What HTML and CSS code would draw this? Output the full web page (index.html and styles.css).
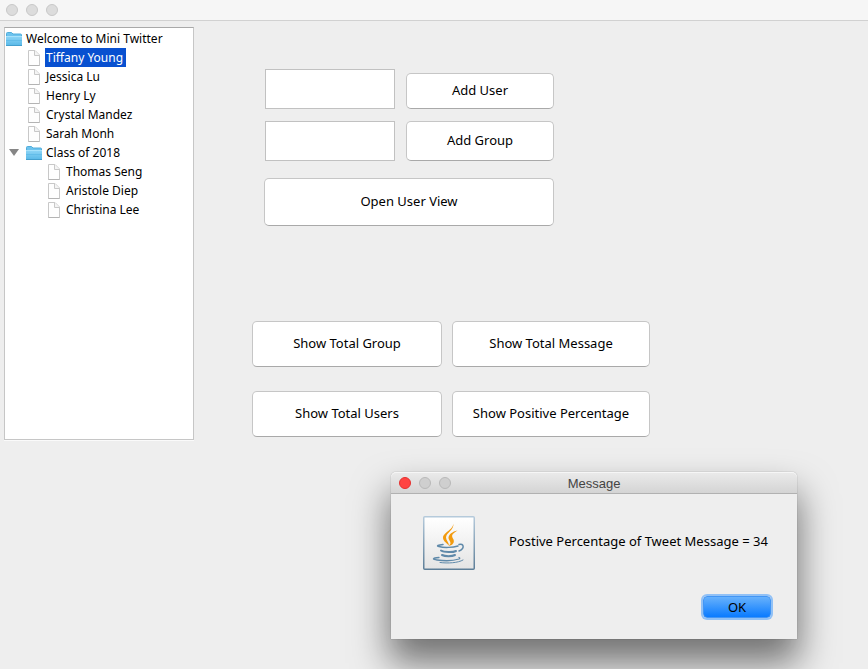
FILE: index.html
```html
<!DOCTYPE html>
<html lang="en">
<head>
<meta charset="utf-8">
<title>Mini Twitter</title>
<link rel="stylesheet" href="styles.css">
</head>
<body>
<svg class="defs" width="0" height="0" aria-hidden="true">
  <defs>
    <linearGradient id="folder-fill" x1="0" y1="0" x2="0" y2="1">
      <stop offset="0" stop-color="#8fd6f7"/>
      <stop offset="1" stop-color="#5ab9e8"/>
    </linearGradient>
    <linearGradient id="tile-fill" x1="0" y1="0" x2="0" y2="1">
      <stop offset="0" stop-color="#ffffff"/>
      <stop offset="1" stop-color="#e4e4e4"/>
    </linearGradient>
    <linearGradient id="tile-edge" x1="0" y1="0" x2="0" y2="1">
      <stop offset="0" stop-color="#b5cadb"/>
      <stop offset="1" stop-color="#5d7e98"/>
    </linearGradient>
    <symbol id="folder" viewBox="0 0 16 14">
      <path d="M.5 12.500V1.500q0-1 1-1h4l1.500 1.500h7.500q1 0 1 1v9.500z" fill="#6dc3ee" stroke="#50addb"/>
      <path d="M0 4h16v9.500H0z" fill="url(#folder-fill)"/>
      <path d="M0 4.500h16" stroke="#a8e2fb"/>
      <path d="M0 8.500h16" stroke="#63bde9"/>
      <path d="M0 13.500h16" stroke="#449fce"/>
    </symbol>
    <symbol id="page" viewBox="0 0 12 16">
      <path d="M.5.5h6.500l4.500 4.500v10.500H.5z" fill="#fefefe" stroke="#c8c8c8"/>
      <path d="M6.500.5v5h5" fill="#f4f4f4" stroke="#c8c8c8"/>
      <path d="M.5 15.500h11" stroke="#b4b4b4"/>
    </symbol>
  </defs>
</svg>
<header class="titlebar"><i class="light"></i><i class="light"></i><i class="light"></i></header>
<main class="window">
  <ul class="tree">
    <li>
      <div class="row"><svg class="folder"><use href="#folder"/></svg><span class="name">Welcome to Mini Twitter</span></div>
      <ul>
        <li class="row"><svg class="page"><use href="#page"/></svg><span class="name selected">Tiffany Young</span></li>
        <li class="row"><svg class="page"><use href="#page"/></svg><span class="name">Jessica Lu</span></li>
        <li class="row"><svg class="page"><use href="#page"/></svg><span class="name">Henry Ly</span></li>
        <li class="row"><svg class="page"><use href="#page"/></svg><span class="name">Crystal Mandez</span></li>
        <li class="row"><svg class="page"><use href="#page"/></svg><span class="name">Sarah Monh</span></li>
        <li class="branch">
          <div class="row"><svg class="folder"><use href="#folder"/></svg><span class="name">Class of 2018</span></div>
          <ul>
            <li class="row"><svg class="page"><use href="#page"/></svg><span class="name">Thomas Seng</span></li>
            <li class="row"><svg class="page"><use href="#page"/></svg><span class="name">Aristole Diep</span></li>
            <li class="row"><svg class="page"><use href="#page"/></svg><span class="name">Christina Lee</span></li>
          </ul>
        </li>
      </ul>
    </li>
  </ul>
  <section class="controls">
    <form class="entry">
      <input class="field" type="text" aria-label="User name">
      <button class="button short" type="button">Add User</button>
      <input class="field" type="text" aria-label="Group name">
      <button class="button" type="button">Add Group</button>
      <button class="button wide" type="button">Open User View</button>
    </form>
    <div class="stats">
      <button class="button" type="button">Show Total Group</button>
      <button class="button" type="button">Show Total Message</button>
      <button class="button" type="button">Show Total Users</button>
      <button class="button" type="button">Show Positive Percentage</button>
    </div>
  </section>
</main>
<div class="dialog" role="dialog" aria-labelledby="dialog-title">
  <div class="dialog-bar">
    <i class="light close"></i><i class="light"></i><i class="light"></i>
    <h1 class="dialog-title" id="dialog-title">Message</h1>
  </div>
  <div class="dialog-body">
    <svg class="java" viewBox="0 0 52 54" aria-hidden="true">
      <rect x=".75" y=".75" width="50.500" height="52.500" rx="1" fill="url(#tile-fill)" stroke="url(#tile-edge)" stroke-width="1.500"/>
      <g fill="#f29a0d">
        <path d="M30 6.500C32 13 20.500 16 20 21.500c0 3.500 3 5 6 8 0-3-3-5-3-8 0-5 9.500-8 7-15z"/>
        <path d="M34.500 14.500c-5 1-9 4-9 7.500 0 2 2 3 2 5 0 1-1 2-2 3 5-1 6-4 5-6.500-1-2-2-3-1-5 1-1.500 3-2.500 5-4z"/>
      </g>
      <g fill="none" stroke="#5f89a9" stroke-linecap="round">
        <path d="M20 28.500c-5 .5-7 1.500-4 2 5 1.500 14 1 19-.5" stroke-width="1.500"/>
        <path d="M36 28.500c5-1.500 6 4 0 6.500" stroke-width="1.500"/>
        <path d="M18 34.500c3 2 12 2 15 .5" stroke-width="2"/>
        <path d="M19 39c3 1.500 10 1.500 13 0" stroke-width="2"/>
        <path d="M16 41.500c-7 .5-7 2-2 2.500 7 1 16 1 22-1 1-.5 1-1 0-1.500" stroke-width="1.300"/>
        <path d="M17 46.500c8 1 18 .5 23-2.500" stroke-width="1"/>
      </g>
    </svg>
    <p class="message">Postive Percentage of Tweet Message = 34</p>
    <button class="ok" type="button">OK</button>
  </div>
</div>
</body>
</html>
```
FILE: styles.css
```css
* {
  box-sizing: border-box;
}

body {
  margin: 0;
  min-height: 100vh;
  overflow: hidden;
  background: #eee;
  color: #000;
  font: 13px/19px "Lucida Grande", "Noto Sans", sans-serif;
}

button,
input {
  font: inherit;
  color: inherit;
}

ul {
  margin: 0;
  padding: 0;
  list-style: none;
}

.defs {
  position: absolute;
}

.titlebar {
  display: flex;
  align-items: center;
  gap: 8px;
  height: 21px;
  padding: 0 6px;
  background: #f6f6f6;
  border-bottom: 1px solid #d1d1d1;
}

.light {
  width: 12px;
  height: 12px;
  border: 1px solid #c8c8c8;
  border-radius: 50%;
  background: #dcdcdc;
}

.window {
  display: flex;
  align-items: flex-start;
  padding: 6px 4px;
}

.tree {
  flex: none;
  width: 190px;
  min-height: 413px;
  padding: 1px 0;
  background: #fff;
  border: 1px solid #c6c6c6;
  border-top-color: #a9a9a9;
  box-shadow: 0 1px #fafafa;
  font-size: 12px;
}

.tree ul {
  padding-left: 20px;
}

.row {
  display: flex;
  align-items: center;
  height: 19px;
  padding-left: 1px;
}

.name {
  padding: 0 3px 0 1px;
  margin-left: 3px;
  white-space: nowrap;
}

.selected {
  background: #0850d0;
  color: #fff;
}

.folder {
  width: 16px;
  height: 14px;
}

.page {
  width: 12px;
  height: 16px;
  margin: 0 2px;
}

.branch {
  position: relative;
}

.branch::before {
  content: "";
  position: absolute;
  left: -16px;
  top: 6px;
  border: solid transparent;
  border-width: 7px 5px 0;
  border-top-color: #868686;
}

.controls {
  flex: 1;
  padding: 42px 0 0 58px;
}

.entry {
  display: grid;
  grid-template-columns: 131px 148px;
  grid-template-rows: 40px 40px 48px;
  column-gap: 11px;
  row-gap: 12px;
  padding-left: 12px;
}

.field {
  width: 130px;
  height: 40px;
  margin-left: 1px;
  border: 1px solid #c1c1c1;
  background: #fff;
}

.button {
  padding: 0 0 1px;
  background: #fff;
  border: 1px solid #c6c6c6;
  border-bottom-color: #a9a9a9;
  border-radius: 5px;
}

.short {
  height: 36px;
  align-self: end;
}

.wide {
  grid-column: span 2;
  margin-top: 5px;
  height: 48px;
}

.stats {
  display: grid;
  grid-template-columns: 190px 198px;
  grid-auto-rows: 46px;
  gap: 24px 10px;
  margin-top: 100px;
}

.dialog {
  position: absolute;
  left: 391px;
  top: 472px;
  width: 406px;
  background: #eee;
  border-radius: 5px 5px 0 0;
  box-shadow: 0 0 1px rgba(0, 0, 0, .5), 0 22px 36px 2px rgba(0, 0, 0, .52);
}

.dialog-bar {
  position: relative;
  display: flex;
  align-items: center;
  gap: 8px;
  height: 22px;
  padding: 0 8px;
  border-bottom: 1px solid #b1b1b1;
  border-radius: 5px 5px 0 0;
  background: linear-gradient(#ebebeb, #d4d4d4);
  box-shadow: inset 0 1px #f6f6f6;
}

.dialog-bar .light {
  background: #cfcfcf;
  border-color: #b9b9b9;
}

.dialog-bar .close {
  background: #ff4442;
  border-color: #e5302f;
}

.dialog-title {
  position: absolute;
  inset: 0;
  margin: 0;
  text-align: center;
  color: #444;
  font: 13px/23px "Liberation Sans", sans-serif;
}

.dialog-body {
  display: grid;
  grid-template-columns: 52px 1fr;
  column-gap: 34px;
  row-gap: 26px;
  padding: 22px 20px 21px 32px;
}

.java {
  width: 52px;
  height: 54px;
}

.message {
  align-self: center;
  margin: 0 0 4px;
  white-space: nowrap;
}

.ok {
  grid-column: 2;
  justify-self: end;
  width: 68px;
  height: 22px;
  margin-right: 6px;
  padding: 0;
  border: 1px solid #4396f5;
  border-radius: 4px;
  background: linear-gradient(#67b1fc, #0a7bff);
  box-shadow: 0 0 0 2px #91c1f6;
}
```
